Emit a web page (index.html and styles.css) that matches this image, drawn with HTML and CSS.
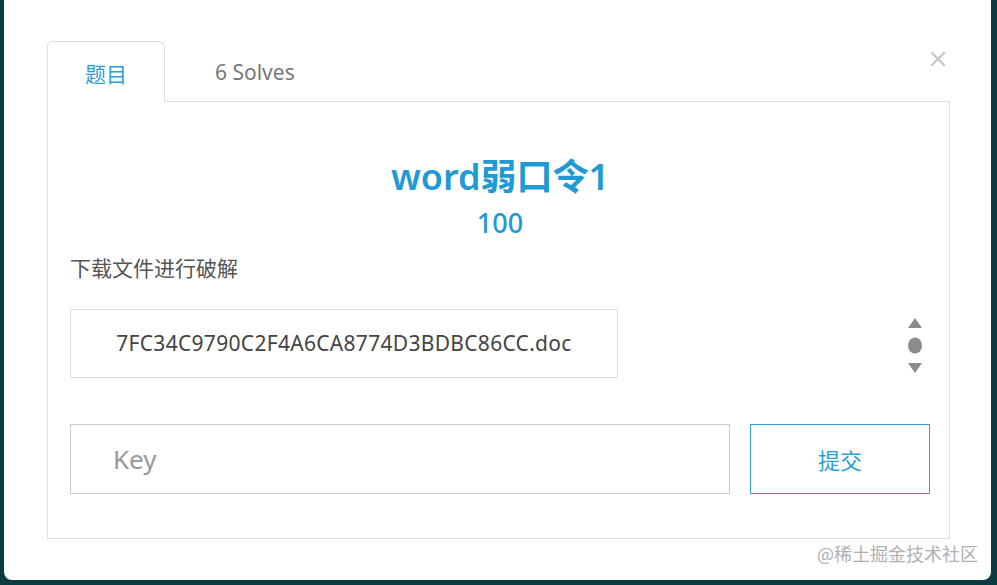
FILE: index.html
```html
<!DOCTYPE html>
<html lang="zh-CN">

<head>
    <meta charset="UTF-8">
    <meta name="viewport" content="width=device-width, initial-scale=1.0">
    <title>word弱口令1</title>
    <link rel="stylesheet" href="styles.css">
</head>

<body>
    <div class="modal">
        <span class="close">
            <svg width="16" height="16" viewBox="0 0 16 16"><path d="M2 2L14 14M14 2L2 14" stroke="#c8c8c8" stroke-width="2.4" stroke-linecap="round"/></svg>
        </span>
        <ul class="tabs">
            <li class="tab active">题目</li>
            <li class="tab solves">6 Solves</li>
        </ul>
        <div class="panel">
            <h2 class="name">word弱口令1</h2>
            <p class="score">100</p>
            <p class="desc">下载文件进行破解</p>
            <div class="file-row">
                <a class="file" href="javascript:;">7FC34C9790C2F4A6CA8774D3BDBC86CC.doc</a>
                <span class="spin">
                    <svg width="16" height="56" viewBox="0 0 16 56"><path d="M8 0L15 10H1Z" fill="#8c8c8c"/><ellipse cx="8" cy="27.5" rx="7" ry="8" fill="#8c8c8c"/><path d="M1 45H15L8 55Z" fill="#8c8c8c"/></svg>
                </span>
            </div>
            <form class="key-row">
                <input type="text" class="key" placeholder="Key" />
                <button class="submit">提交</button>
            </form>
        </div>
        <span class="mark">@稀土掘金技术社区</span>
    </div>
</body>

</html>
```

FILE: styles.css
```css
html * {
    padding: 0;
    margin: 0;
    box-sizing: border-box;
}

body {
    background: #0b3b40;
    font-family: "Noto Sans", "Noto Sans CJK SC", sans-serif;
    height: 585px;
    overflow: hidden;
}

.modal {
    position: relative;
    width: 987px;
    height: 580px;
    margin-left: 4px;
    background: #fff;
    border-radius: 0 0 8px 8px;
    padding: 41px 41px 0 43px;
}

.close {
    position: absolute;
    top: 51px;
    right: 45px;
    line-height: 0;
}

.tabs {
    display: flex;
    list-style: none;
    border-bottom: 1px solid #ddd;
    height: 61px;
}

.tab {
    height: 61px;
    line-height: 62px;
    font-size: 21px;
    color: #777;
    font-family: "Noto Sans CJK SC", sans-serif;
}

.tab.active {
    width: 118px;
    text-align: center;
    color: #2a9fd6;
    background: #fff;
    border: 1px solid #ddd;
    border-bottom: 0;
    border-radius: 6px 6px 0 0;
    height: 61px;
}

.tab.solves {
    padding-left: 50px;
    font-family: "Noto Sans", sans-serif;
}

.panel {
    height: 437px;
    border: 1px solid #ddd;
    border-top: 0;
    padding: 55px 19px 0 22px;
}

.name {
    text-align: center;
    font-size: 36px;
    line-height: 40px;
    font-weight: 600;
    color: #1f9ad3;
    font-family: "Noto Sans", "Noto Sans CJK SC", sans-serif;
}

.score {
    text-align: center;
    font-size: 27px;
    line-height: 32px;
    margin-top: 10px;
    font-weight: 500;
    color: #1f9ad3;
}

.desc {
    font-size: 21px;
    line-height: 28px;
    margin-top: 14px;
    color: #555;
    font-family: "Noto Sans CJK SC", sans-serif;
}

.file-row {
    display: flex;
    align-items: center;
    justify-content: space-between;
    margin-top: 28px;
    padding-right: 7px;
}

.file {
    display: block;
    flex: none;
    width: 548px;
    height: 69px;
    line-height: 67px;
    border: 1px solid #ddd;
    text-align: center;
    font-size: 21px;
    color: #444;
    text-decoration: none;
    letter-spacing: 0.3px;
}

.spin {
    line-height: 0;
    margin-top: 4px;
}

.key-row {
    display: flex;
    gap: 20px;
    margin-top: 46px;
}

.key {
    flex: 1;
    min-width: 0;
    height: 70px;
    border: 1px solid #ccc;
    padding: 0 42px;
    font-size: 26px;
    font-family: "Noto Sans", sans-serif;
    outline: none;
}

.key::placeholder {
    color: #999;
}

.submit {
    flex: none;
    width: 180px;
    height: 70px;
    border: 1px solid #2a9fd6;
    background: #fff;
    color: #2a9fd6;
    font-size: 22px;
    font-family: "Noto Sans CJK SC", sans-serif;
}

.mark {
    position: absolute;
    right: 13px;
    bottom: 14px;
    font-size: 18px;
    color: #b0b0b0;
    font-family: "Noto Sans CJK SC", sans-serif;
}
```
